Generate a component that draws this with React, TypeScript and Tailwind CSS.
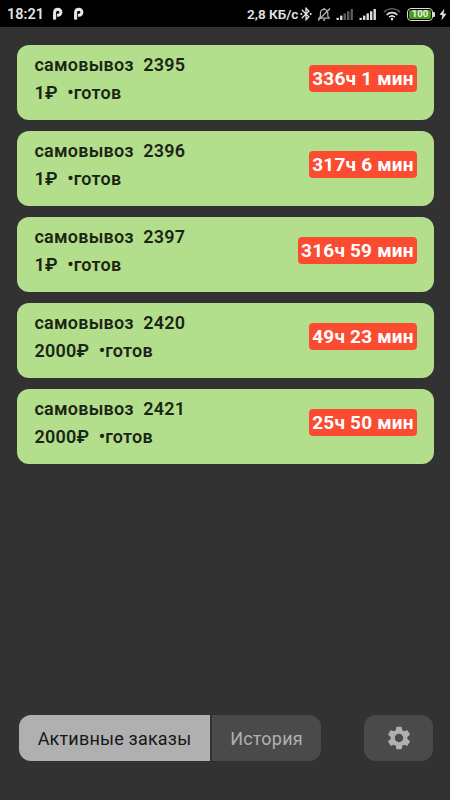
import { MdBluetoothConnected, MdSettings } from "react-icons/md";

interface Order {
  id: number;
  price: string;
  status: string;
  elapsed: string;
}

const orders: Order[] = [
  { id: 2395, price: "1₽", status: "готов", elapsed: "336ч 1 мин" },
  { id: 2396, price: "1₽", status: "готов", elapsed: "317ч 6 мин" },
  { id: 2397, price: "1₽", status: "готов", elapsed: "316ч 59 мин" },
  { id: 2420, price: "2000₽", status: "готов", elapsed: "49ч 23 мин" },
  { id: 2421, price: "2000₽", status: "готов", elapsed: "25ч 50 мин" },
];

function ParkingIcon() {
  return (
    <svg width="12" height="14" viewBox="0 0 12 14" fill="none">
      <path
        d="M2.6 12V5.2A3.4 3.2 0 0 1 5.9 2.3A3 3 0 0 1 5.9 8.3H5"
        stroke="#e8e8e8"
        strokeWidth="3"
      />
      <path d="M1.1 7.2H4.1V12.6H1.1Z" fill="#e8e8e8" />
    </svg>
  );
}

function BellOffIcon() {
  return (
    <svg width="14" height="15" viewBox="0 0 14 15" fill="none" stroke="#b8b8b8">
      <path
        d="M2 11.2H12.2L10.8 9.4V6.2A3.7 3.9 0 0 0 3.4 6.2V9.4L2 11.2Z"
        strokeWidth="1.2"
      />
      <path d="M6 13H8.2M7.1 1V2.5" strokeWidth="1.3" />
      <path d="M1 13.5L13 1.5" strokeWidth="1.2" />
    </svg>
  );
}

function SignalIcon({ level }: { level: number }) {
  return (
    <svg width="18" height="13" viewBox="0 0 18 13">
      {[0, 1, 2, 3, 4].map((bar) => (
        <rect
          key={bar}
          x={0.5 + bar * 3.5}
          y={9.8 - bar * 2.2}
          width="2.4"
          height={2.2 + bar * 2.2}
          fill={bar < level ? "#dcdcdc" : "#5c5c5c"}
        />
      ))}
    </svg>
  );
}

function WifiIcon() {
  return (
    <svg width="18" height="14" viewBox="0 0 18 14" fill="none" strokeWidth="1.7">
      <path d="M1 5.2C5.4 0.6 12.6 0.6 17 5.2" stroke="#5a5a5a" />
      <path d="M3.7 7.8C6.8 4.9 11.2 4.9 14.3 7.8" stroke="#dedede" />
      <path d="M6.2 10.2C7.8 8.7 10.2 8.7 11.8 10.2" stroke="#dedede" />
      <circle cx="9" cy="12.1" r="1.3" fill="#dedede" />
    </svg>
  );
}

function BatteryIcon() {
  return (
    <div className="flex items-center">
      <div className="flex h-[13px] w-[26px] items-center justify-center rounded-[4px] border-[1.5px] border-[#dcdcdc] p-px">
        <div className="flex h-full w-full items-center justify-center rounded-[2px] bg-[#4c9a20] text-[9.5px] leading-none font-bold text-[#edf8e5]">
          100
        </div>
      </div>
      <div className="h-[5px] w-[2px] rounded-r-[1px] bg-[#dcdcdc]" />
    </div>
  );
}

function StatusBar() {
  return (
    <header className="flex h-[27px] items-center bg-black pt-px pl-[7px] text-[#e4e4e4]">
      <span className="w-[45px] pt-px text-[14.5px] font-semibold">18:21</span>
      <ParkingIcon />
      <div className="ml-[9px]">
        <ParkingIcon />
      </div>
      <span className="ml-auto w-[51px] text-[13.5px] font-semibold whitespace-nowrap">
        2,8 КБ/с
      </span>
      <MdBluetoothConnected className="h-[16px] w-[16px] shrink-0" />
      <div className="ml-[3px]">
        <BellOffIcon />
      </div>
      <div className="ml-[5px]">
        <SignalIcon level={2} />
      </div>
      <div className="ml-[5px]">
        <SignalIcon level={5} />
      </div>
      <div className="ml-[6px]">
        <WifiIcon />
      </div>
      <div className="ml-[6px]">
        <BatteryIcon />
      </div>
      <svg className="mr-[3px] ml-[4px]" width="8" height="13" viewBox="0 0 8 13">
        <path d="M5.4 0.5L0.6 6.8L3.4 7.2L2.4 12.5L7.5 5.8L4.5 5.4Z" fill="#e0e0e0" />
      </svg>
    </header>
  );
}

function OrderCard({ order }: { order: Order }) {
  return (
    <li className="flex h-[75px] items-start justify-between rounded-[12px] bg-[#b3df8c] pr-[17px] pl-[17.5px]">
      <div className="flex flex-col pt-[6px] text-[18px] leading-[27.5px] font-semibold tracking-[0.22px] text-[#1b2515]">
        <span className="whitespace-pre">{`самовывоз  ${order.id}`}</span>
        <span className="whitespace-pre">{`${order.price}  •${order.status}`}</span>
      </div>
      <span className="mt-[19.5px] flex h-[27px] items-center rounded-[4px] bg-[#fb4c32] px-[2.8px] pt-px text-[19px] font-bold tracking-[0.2px] whitespace-nowrap text-white">
        {order.elapsed}
      </span>
    </li>
  );
}

export default function App() {
  return (
    <div className="flex h-[800px] w-[450px] flex-col overflow-hidden bg-[#323232] font-['Roboto',sans-serif]">
      <StatusBar />
      <ul className="flex flex-1 flex-col gap-[11px] pt-[18.4px] pr-[16.5px] pl-[17px]">
        {orders.map((order) => (
          <OrderCard key={order.id} order={order} />
        ))}
      </ul>
      <nav className="flex h-[85px] items-start justify-between pr-[17px] pl-[19px]">
        <div className="flex h-[46px] gap-[2px] text-[18px] tracking-[0.2px]">
          <button className="w-[191px] rounded-l-[12px] bg-[#b0b0b0] text-[#171717]">
            Активные заказы
          </button>
          <button className="w-[109px] rounded-r-[12px] bg-[#4a4a4a] text-[#b0b0b0]">
            История
          </button>
        </div>
        <button className="flex h-[46px] w-[69px] items-center justify-center rounded-[12px] bg-[#4a4a4a] text-[#b0b0b0]">
          <MdSettings size={28} />
        </button>
      </nav>
    </div>
  );
}
